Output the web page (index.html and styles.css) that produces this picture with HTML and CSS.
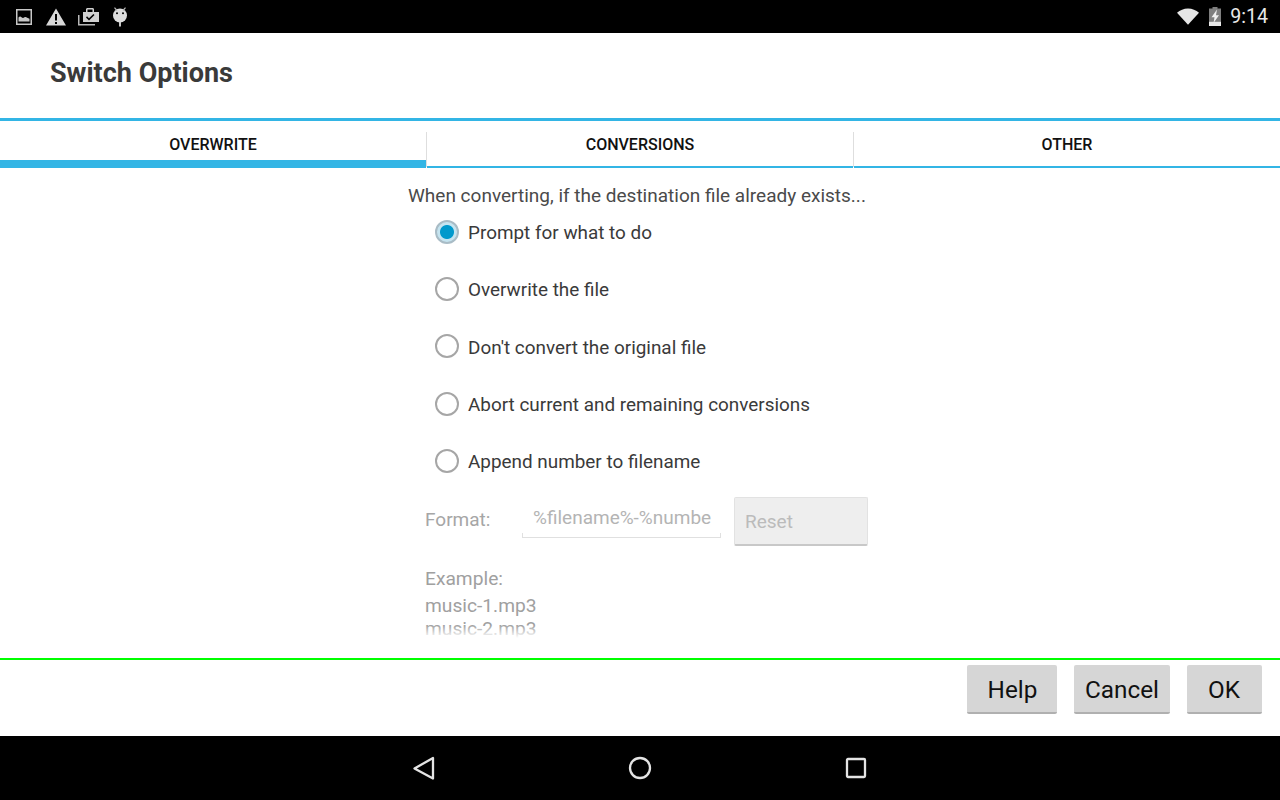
FILE: index.html
```html
<!DOCTYPE html>
<html lang="en">
<head>
<meta charset="utf-8">
<title>Switch Options</title>
<link rel="stylesheet" href="styles.css">
</head>
<body>
<div class="screen">
  <header class="status">
    <div class="status-left">
      <svg class="ic ic-pic" viewBox="0 0 18 18"><path fill="#c8c8c8" fill-rule="evenodd" d="M1 1h16v16H1zM2.500 2.500v13h13v-13z"/><path fill="#c8c8c8" d="M3.500 13.500V9.500c1-1.300 2-1.300 3-.3 1 1 1.800 1 2.700.3 1-.8 2-.5 3 .3l2.300 1v2.700z"/></svg>
      <svg class="ic ic-warn" viewBox="0 0 22 20"><path fill="#d8d8d8" fill-rule="evenodd" d="M11 1.500 21 18.500H1zM10 7v6.500h2V7zM10 15v2h2v-2z"/></svg>
      <svg class="ic ic-task" viewBox="0 0 22 20"><path fill="#d0d0d0" fill-rule="evenodd" d="M5 5h3V2.500C8 1.500 8.800 1 9.500 1h5c.8 0 1.500.5 1.500 1.500V5h5v10H5zM9.500 2.500V5h5V2.500zM9 9.300 8 10.400l3 3 5.500-5.400-1.100-1.100-4.400 4.300z"/><path fill="#b8b8b8" d="M0 8h1.500v9H17v1.500H0z"/></svg>
      <svg class="ic ic-droid" viewBox="0 0 18 20"><circle cx="9" cy="8.500" r="7" fill="#dcdcdc"/><path stroke="#b8b8b8" stroke-width="1.200" d="M3.500.6 6 3.500M14.500.6 12 3.500" fill="none"/><path stroke="#dcdcdc" stroke-width="1.800" d="M9 14v5.600" fill="none"/><circle cx="6" cy="6.300" r="1" fill="#000"/><circle cx="12" cy="6.300" r="1" fill="#000"/></svg>
    </div>
    <div class="status-right">
      <svg class="ic ic-wifi" viewBox="0 0 22 17"><path fill="#e6e6e6" d="M11 16.800 0 4.800C3 2 6.800.4 11 .4s8 1.600 11 4.400z"/></svg>
      <svg class="ic ic-batt" viewBox="0 0 14 20"><path fill="#7f7f7f" d="M4.500 0h5v1.500H13v13H1v-13h3.500z"/><path fill="#e8e8e8" d="M1 14.500h12V19H1z"/><path fill="#f0f0f0" d="M9 2.500 3.500 10.200h3L5.500 16l5.500-7.800H8z"/></svg>
      <span class="clock">9:14</span>
    </div>
  </header>

  <div class="title-bar"><h1 class="title">Switch Options</h1></div>

  <nav class="tabs">
    <div class="tab tab-active"><span>OVERWRITE</span></div>
    <div class="tab"><span class="sep"></span><span>CONVERSIONS</span></div>
    <div class="tab"><span class="sep"></span><span>OTHER</span></div>
  </nav>

  <main class="content">
    <div class="panel">
      <p class="intro">When converting, if the destination file already exists...</p>
      <ul class="radios">
        <li class="radio-row"><span class="radio radio-on"></span>Prompt for what to do</li>
        <li class="radio-row"><span class="radio"></span>Overwrite the file</li>
        <li class="radio-row"><span class="radio"></span>Don't convert the original file</li>
        <li class="radio-row"><span class="radio"></span>Abort current and remaining conversions</li>
        <li class="radio-row"><span class="radio"></span>Append number to filename</li>
      </ul>
      <div class="format">
        <span class="format-label">Format:</span>
        <span class="format-input">%filename%-%numbe</span>
        <span class="reset">Reset</span>
      </div>
      <div class="example">
        <div class="example-head">Example:</div>
        <div class="example-line">music-1.mp3</div>
        <div class="example-line">music-2.mp3</div>
      </div>
    </div>
  </main>

  <footer class="actions">
    <span class="btn btn-help">Help</span>
    <span class="btn btn-cancel">Cancel</span>
    <span class="btn btn-ok">OK</span>
  </footer>

  <nav class="navbar">
    <svg class="nav-ic" viewBox="0 0 24 24"><path fill="none" stroke="#e4e4e4" stroke-width="2.300" stroke-linejoin="round" d="M21 2v20.500L2.500 12.500z"/></svg>
    <svg class="nav-ic" viewBox="0 0 24 24"><circle cx="12" cy="12" r="10" fill="none" stroke="#e4e4e4" stroke-width="2.300"/></svg>
    <svg class="nav-ic" viewBox="0 0 24 24"><rect x="3" y="3" width="18" height="18" rx="1" fill="none" stroke="#e4e4e4" stroke-width="2.300"/></svg>
  </nav>
</div>
</body>
</html>
```
FILE: styles.css
```css
* { box-sizing: border-box; }
html, body { margin: 0; padding: 0; }
body { background: #fff; font-family: Roboto, sans-serif; }
.screen { width: 1280px; height: 800px; display: flex; flex-direction: column; overflow: hidden; }

.status { height: 33px; background: #000; display: flex; justify-content: space-between; align-items: center; flex: none; }
.status-left { display: flex; align-items: center; padding-left: 15px; }
.status-right { display: flex; align-items: center; padding-right: 12px; }
.ic { display: block; flex: none; }
.ic-pic { width: 18px; height: 18px; }
.ic-warn { width: 22px; height: 20px; margin-left: 12px; }
.ic-task { width: 22px; height: 20px; margin-left: 11px; }
.ic-droid { width: 18px; height: 20px; margin-left: 11px; }
.ic-wifi { width: 22px; height: 17px; }
.ic-batt { width: 14px; height: 20px; margin-left: 9px; }
.clock { color: #e8e8e8; font-size: 19.600px; margin-left: 8px; line-height: 33px; }

.title-bar { height: 85px; flex: none; display: flex; align-items: flex-start; padding: 23px 0 0 50px; }
.title { margin: 0; font-size: 27px; line-height: 34px; font-weight: 700; color: #3a3a3a; }

.tabs { height: 50px; flex: none; border-top: 3px solid #33b5e5; display: flex; }
.tab { flex: 1; display: flex; align-items: flex-start; justify-content: center; position: relative; padding-top: 13px; line-height: 22px; font-size: 16px; font-weight: 500; color: #111; border-bottom: 2px solid #33b5e5; margin-left: 1px; }
.tab-active { border-bottom-width: 8px; margin-left: 0; }
.sep { position: absolute; left: -1px; top: 11px; width: 1px; height: 35px; background: #dedede; }

.content { flex: 1; min-height: 0; overflow: hidden; position: relative; }
.content::after { content: ""; position: absolute; left: 0; right: 0; bottom: 0; height: 33px; background: linear-gradient(rgba(255,255,255,0), #fff 13px); }
.panel { width: 464px; margin: 0 auto; }
.intro { margin: 0; padding-top: 16px; font-size: 19px; line-height: 24px; color: #4a4a4a; }
.radios { list-style: none; margin: -5px 0 0; padding: 0 0 0 27px; }
.radio-row { height: 57.330px; padding-top: 2px; display: flex; align-items: center; font-size: 18.900px; color: #3a3a3a; }
.radio { width: 24px; height: 24px; border-radius: 50%; border: 2px solid #a6a6a6; margin: 0 9px 2px -0.500px; flex: none; background: #fff; }
.radio-on { border-color: #a9bcc6; background: radial-gradient(circle, #0099cc 0 6.500px, #c5e4f0 7.500px); margin-right: 9.500px; }
.radio { margin-right: 9.500px; }

.format { display: flex; padding-left: 17px; color: #a6a6a6; font-size: 19px; height: 53px; margin-top: 7px; }
.format-label { width: 97px; padding-top: 11px; }
.format-input { width: 199px; height: 41px; padding: 9px 0 0 11px; color: #b4b4b4; border-bottom: 1px solid #e0e0e0; background: linear-gradient(#e0e0e0, #e0e0e0) left bottom / 1px 4px no-repeat, linear-gradient(#e0e0e0, #e0e0e0) right bottom / 1px 4px no-repeat; }
.reset { width: 134px; height: 49px; margin-left: 13px; background: #eee; border: 1px solid #e2e2e2; border-bottom: 2px solid #c8c8c8; border-radius: 2px; padding: 12px 0 0 10px; color: #bbb; }
.example { padding-left: 17px; color: #a0a0a0; font-size: 19.200px; }
.example-head { margin-top: 17px; line-height: 24px; }
.example-line { line-height: 23px; }
.example-head + .example-line { margin-top: 3px; }

.actions { height: 78px; flex: none; border-top: 2px solid #00ff00; display: flex; justify-content: flex-end; padding: 5px 18px 0 0; gap: 17px; }
.btn { height: 49px; padding-top: 2px; background: #d6d6d6; border-bottom: 2px solid #b0b0b0; border-radius: 2px; font-size: 24.300px; color: #111; display: flex; align-items: center; justify-content: center; }
.btn-help { width: 90px; padding-left: 1px; }
.btn-cancel { width: 96px; }
.btn-ok { width: 75px; padding-right: 1px; }

.navbar { height: 64px; flex: none; background: #000; display: flex; align-items: center; justify-content: center; gap: 192px; }
.nav-ic { width: 24px; height: 24px; display: block; }
```
